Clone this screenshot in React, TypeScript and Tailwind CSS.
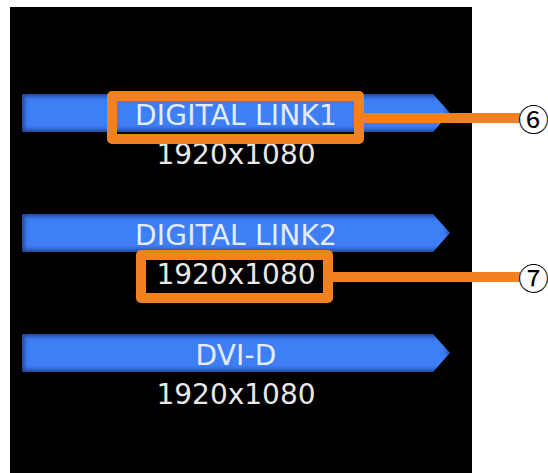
import React from 'react';

const rows = [
  { name: 'DIGITAL LINK1', res: '1920x1080' },
  { name: 'DIGITAL LINK2', res: '1920x1080' },
  { name: 'DVI-D', res: '1920x1080' },
];

const font = { fontFamily: '"DejaVu Sans", Verdana, sans-serif' };
const cjk = { fontFamily: '"Noto Sans CJK JP", sans-serif' };

// 注記（オレンジ枠 + 引き出し線 + 丸数字）
const Callout: React.FC<{ box: string; line: string; num: string; pos: string }> = ({ box, line, num, pos }) => (
  <div className={`absolute flex items-center ${pos}`}>
    <div className={`h-[53px] border-[10px] border-[#f28220] rounded-[5px] ${box}`} />
    <div className={`h-[10px] bg-[#f28220] ${line}`} />
    <span className="text-[31px] leading-none text-black -ml-[2px]" style={cjk}>
      {num}
    </span>
  </div>
);

const App: React.FC = () => {
  return (
    <div className="relative w-[548px] h-[473px] bg-white overflow-hidden">
      {/* 入力信号パネル */}
      <div className="ml-[10px] mt-[7px] w-[462px] h-[466px] bg-black pt-[87px] pl-[12px] flex flex-col gap-[45px]" style={font}>
        {rows.map((row) => (
          <div key={row.name} className="w-[428px] flex flex-col items-center gap-[9px]">
            <div className="w-full h-[38px] bg-[#3f7ff6] shadow-[inset_0_0_5px_2px_rgba(10,30,90,0.7)] [clip-path:polygon(0_0,411px_0,428px_50%,411px_100%,0_100%)] flex items-center justify-center">
              <span className="text-[28px] leading-none tracking-[0.2px] text-[#e4ecfb] mt-[6px]">{row.name}</span>
            </div>
            <div className="text-[28px] leading-none text-[#e8e8e8]">{row.res}</div>
          </div>
        ))}
      </div>

      <Callout pos="left-[107px] top-[91px]" box="w-[257px]" line="w-[156px]" num="⑥" />
      <Callout pos="left-[136px] top-[250px]" box="w-[197px]" line="w-[187px]" num="⑦" />
    </div>
  );
};

export default App;
